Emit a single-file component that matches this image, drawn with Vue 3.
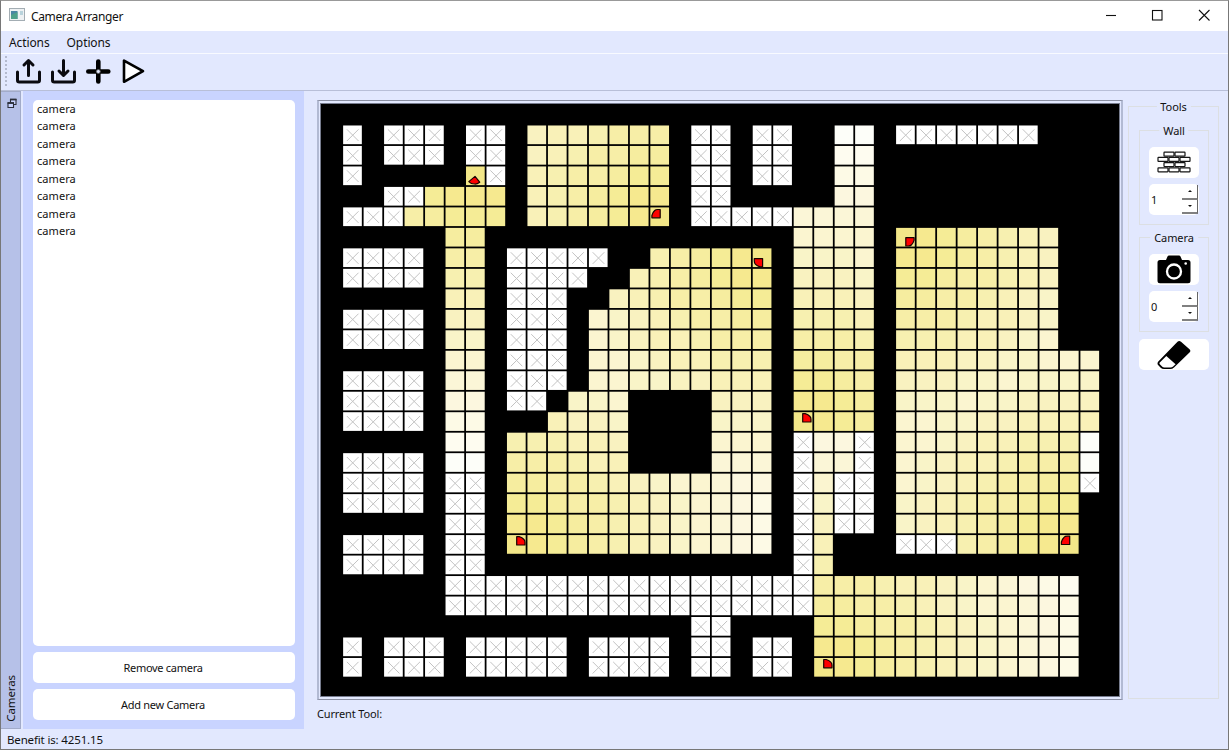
<script setup>
const PITCH = 20.48
const CELL = 18.7
const ORIGIN = { x: 322.65, y: 105 }

// [row, columns without coverage, columns seen by a camera]
const rows = [
  [1, '1 3-5 7-8 18-19 21-22 28-34', '10-16 25-26'],
  [2, '1 3-5 7-8 18-19 21-22', '10-16 25-26'],
  [3, '1 8 18-19 21-22', '7 10-16 25-26'],
  [4, '3-4 18-19', '5-8 10-16 25-26'],
  [5, '1-3 18-22', '4-8 10-16 23-26'],
  [6, '', '6-7 23-26 28-35'],
  [7, '1-4 9-13', '6-7 16-21 23-26 28-35'],
  [8, '1-4 9-12', '6-7 15-21 23-26 28-35'],
  [9, '9-11', '6-7 14-21 23-26 28-35'],
  [10, '1-4 9-11', '6-7 13-21 23-26 28-35'],
  [11, '1-4 9-11', '6-7 13-21 23-26 28-35'],
  [12, '9-11', '6-7 13-21 23-26 28-37'],
  [13, '1-4 9-11', '6-7 13-21 23-26 28-37'],
  [14, '1-4 9-10', '6-7 12-14 19-21 23-26 28-37'],
  [15, '1-4', '6-7 11-14 19-21 23-26 28-37'],
  [16, '23 26', '6-7 9-14 19-21 24-25 28-37'],
  [17, '1-4 23 26', '6-7 9-14 19-21 24-25 28-37'],
  [18, '1-4 6-7 23 25-26 37', '9-21 24 28-36'],
  [19, '1-4 6-7 23 25-26', '9-21 24 28-36'],
  [20, '6-7 23 25-26', '9-21 24 28-36'],
  [21, '1-4 6-7 23 28-30', '9-21 24 31-36'],
  [22, '1-4 6-7 23', '24'],
  [23, '6-23', '24-36'],
  [24, '6-23', '24-36'],
  [25, '18-19', '24-36'],
  [26, '1 3-5 7-11 13-16 18-19 21-22', '24-36'],
  [27, '1 3-5 7-11 13-16 18-19 21-22', '24-36'],
]

const tints = [
  '#f3e788', '#f6e98f', '#f5ec96', '#f6ed9f', '#f7eea7', '#f7f0b0', '#f9f1b8', '#f9f2c0',
  '#f9f4c8', '#fbf5d0', '#fbf6d7', '#fcf7df', '#fdfae6', '#fefcf0', '#fdfef9',
]

function expand(spec) {
  return spec.split(' ').filter(Boolean).flatMap((part) => {
    const [from, to = from] = part.split('-').map(Number)
    return Array.from({ length: to - from + 1 }, (_, i) => from + i)
  })
}

function sources(c, r) {
  if (c <= 8) return [[7, 3]]
  if (c <= 16 && r <= 5) return [[16, 5]]
  if (c <= 21 && r <= 21) return [[21, 7], [9, 21]]
  if (c <= 26 && r <= 15) return [[23, 15]]
  if (c >= 28 && r <= 21) return [[28, 6], [36, 21]]
  return [[24, 27]]
}

function tint(c, r) {
  if (c === 37 && r >= 16) return '#fdfef9'
  const d = Math.min(...sources(c, r).map(([x, y]) => Math.hypot(c - x, r - y)))
  return tints[Math.min(tints.length - 1, Math.round(d))]
}

const px = (c) => +(ORIGIN.x + c * PITCH).toFixed(2)
const py = (r) => +(ORIGIN.y + r * PITCH).toFixed(2)

const cells = rows.flatMap(([r, blank, seen]) => [
  ...expand(blank).map((c) => ({ x: px(c), y: py(r), fill: '#fff', blank: true })),
  ...expand(seen).map((c) => ({ x: px(c), y: py(r), fill: tint(c, r), blank: false })),
])
const crosses = cells
  .filter((c) => c.blank)
  .map((c) => `M${c.x + 3.8} ${c.y + 3.9}l11.6 11.6m0-11.6l-11.6 11.6`)
  .join('')

// corner position and rotation of each view wedge
const wedges = [
  [660.2, 217.8, 180],
  [762.6, 258.6, 90],
  [905.8, 237.7, 0],
  [516.7, 545, 270],
  [802.7, 422, 270],
  [1069.7, 544.5, 180],
  [823.7, 667.8, 270],
]

const list = Array.from({ length: 8 }, () => 'camera')
const bricks = [
  [7, 0.6], [18, 0.6], [1, 5.8], [12, 5.8], [23, 5.8], [7, 11], [18, 11], [1, 16.2], [12, 16.2], [23, 16.2],
]
</script>

<template>
  <div class="window">
    <header class="title">
      <svg class="app-icon" width="16" height="14" viewBox="0 0 16 14">
        <rect x=".5" y=".5" width="15" height="12" fill="#eef1f3" stroke="#a3adb3" />
        <rect x="2" y="3" width="6.500" height="8" fill="#4b86a4" />
        <path d="M2 7l6.500-3v7H2z" fill="#4fa08a" />
        <rect x="11" y="3" width="3" height="4" fill="#b9d3dc" />
      </svg>
      <span class="title-text">Camera Arranger</span>
      <svg class="controls" width="110" height="14" viewBox="0 0 110 14">
        <g fill="none" stroke="#111" stroke-width="1.1">
          <path d="M1 7.5h10" />
          <rect x="47.5" y="2.5" width="9.5" height="9.5" />
          <path d="M94 2l10.5 10.5M104.500 2L94 12.500" />
        </g>
      </svg>
    </header>

    <nav class="menu"><span>Actions</span><span>Options</span></nav>

    <div class="toolbar">
      <i class="grip"></i>
      <svg width="134" height="30" viewBox="14 56 134 30">
        <g fill="none" stroke="#0b0b10" stroke-width="3" stroke-linecap="round" stroke-linejoin="round">
          <path d="M17.500 72v8.200q0 1.800 1.800 1.800h18.400q1.800 0 1.800-1.800V72M28.500 75.500V62M24 65l4.500-4.500L33 65" />
          <path d="M52.500 72v8.200q0 1.800 1.800 1.800h18.400q1.800 0 1.800-1.800V72M63.500 60.500V74M59 71l4.500 4.500L68 71" />
        </g>
        <path d="M98.300 61.500v20M88.300 71.500h20" fill="none" stroke="#000" stroke-width="4.600" stroke-linecap="round" />
        <circle cx="98.300" cy="71.500" r="2" fill="#e2e8fe" stroke="#555" stroke-width=".8" />
        <path d="M124 60.600v21.200l19-10.600z" fill="#fff" stroke="#000" stroke-width="2.600" stroke-linejoin="round" />
      </svg>
    </div>

    <main class="body">
      <aside class="strip">
        <svg width="10" height="11" viewBox="0 0 10 11">
          <g fill="#c9d4ff" stroke="#2c2f3a" stroke-width="1.100">
            <path d="M3.500 1.500h5.500v5H3.500z" /><path d="M3 1.500h6.500" stroke-width="1.800" />
            <path d="M1 5h5.500v4.500H1z" /><path d="M.5 5h6.500" stroke-width="1.800" />
          </g>
        </svg>
        <span>Cameras</span>
      </aside>

      <section class="dock">
        <ul class="list"><li v-for="(name, i) in list" :key="i">{{ name }}</li></ul>
        <button>Remove camera</button>
        <button>Add new Camera</button>
      </section>

      <section class="center">
        <div class="frame">
          <svg class="map" width="798" height="592" viewBox="321 104 798 592">
            <rect x="321" y="104" width="798" height="592" fill="#000" />
            <rect v-for="(c, i) in cells" :key="i" :x="c.x" :y="c.y" :width="CELL" :height="CELL" :fill="c.fill" />
            <path :d="crosses" fill="none" stroke="#c3c3c3" stroke-width="1" />
            <g fill="#f00" stroke="#180400" stroke-width="1.200" stroke-linejoin="round">
              <path
                v-for="(w, i) in wedges"
                :key="i"
                d="M0 0H8.300V2.500Q7.500 5.500 5.500 7.300Q4.500 8.300 2.500 8.300H0Z"
                :transform="`translate(${w[0]} ${w[1]}) rotate(${w[2]})`"
              />
              <path d="M475 176.400L479.700 182.200Q477 184.300 474.500 184Q471 184 468.800 181.600Z" />
            </g>
          </svg>
        </div>
        <div class="current">Current Tool:</div>
      </section>

      <aside class="tools group">
        <span class="legend">Tools</span>
        <div class="group inner">
          <span class="legend">Wall</span>
          <div class="tile">
            <svg width="35" height="23" viewBox="0 0 35 23">
              <rect v-for="(b, i) in bricks" :key="i" :x="b[0]" :y="b[1] + .6" width="10" height="4" rx=".5" fill="#fff" stroke="#151515" stroke-width="1.200" />
            </svg>
          </div>
          <div class="spin"><span>1</span><div class="arrows"><i class="up"></i><i class="down"></i></div></div>
        </div>
        <div class="group inner second">
          <span class="legend">Camera</span>
          <div class="tile">
            <svg width="34" height="29" viewBox="0 0 34 29">
              <path d="M3 5h6l1.500-3.500Q11 .5 12 .5h10q1 0 1.500 1L25 5h6q2.500 0 2.500 2.500v18.200q0 2.500-2.500 2.500H3Q.500 28.200.500 25.700V7.500Q.500 5 3 5z" fill="#000" />
              <circle cx="17" cy="16.500" r="7" fill="#000" stroke="#fff" stroke-width="2.300" />
              <circle cx="28.700" cy="8.500" r="1.300" fill="#fff" />
            </svg>
          </div>
          <div class="spin"><span>0</span><div class="arrows"><i class="up"></i><i class="down"></i></div></div>
        </div>
        <div class="tile eraser">
          <svg width="34" height="30" viewBox="0 0 34 30">
            <path d="M20.500 1.800Q22.200.2 24 1.800l8.500 7.500Q34.200 11 32.500 12.600L17 27.500Q15.500 29 13 29H7Q5 29 3.700 27.700L1.300 25.300Q-.3 23.500 1.300 21.500z" fill="#000" />
            <path d="M9.300 15.900l9.300 8.400-2.500 2.300q-1 .9-2.600.9H7.300q-1.200 0-2-.8l-2.500-2.500q-.8-.9 0-1.800z" fill="#fff" />
          </svg>
        </div>
      </aside>
    </main>

    <footer class="status">Benefit is: 4251.15</footer>
  </div>
</template>

<style>
html, body { margin: 0; overflow: hidden; }
</style>

<style scoped>
* { box-sizing: border-box; }
.window {
  width: 1229px; height: 750px; display: flex; flex-direction: column;
  background: #e2e8fe; border: 1px solid #777; border-top-color: #999;
  font: 11.5px/17px "Noto Sans", "Open Sans", sans-serif; color: #111;
}
.title { height: 30px; background: #fff; display: flex; align-items: center; padding-left: 8px; flex: none; }
.app-icon { margin-top: -2px; }
.title-text { margin-left: 6px; font-size: 12px; letter-spacing: -.36px; }
.controls { margin-left: auto; margin-right: 13px; margin-top: -2px; }
.menu { height: 23px; flex: none; display: flex; gap: 17px; padding: 3px 8px 0; border-bottom: 1px solid #f8faff; font-size: 12px; letter-spacing: -.1px; }
.toolbar { height: 37px; flex: none; display: flex; align-items: center; border-bottom: 1px solid #b8bfd8; padding: 0 0 2px 4px; }
.grip { width: 2px; height: 30px; margin-right: 7px; background: repeating-linear-gradient(#b4bace 0 2px, transparent 2px 4px); }
.body { flex: 1; min-height: 0; display: flex; }
.strip {
  width: 20px; background: #b6c1e8; border: 1px solid #a2abc9; border-left: 0;
  display: flex; flex-direction: column; justify-content: space-between; align-items: center; padding: 6px 0 6px 3px;
}
.strip span { writing-mode: vertical-rl; transform: rotate(180deg); font-size: 11.5px; letter-spacing: -.1px; line-height: 16px; margin-right: 2px; }
.dock { width: 281px; margin-left: 2px; background: #c9d4ff; padding: 9px 9px 9px 10px; display: flex; flex-direction: column; gap: 6px; }
.list { flex: 1; margin: 0; padding: 0 4px; list-style: none; background: #fff; border-radius: 5px; font-size: 11px; }
.list li { height: 17.45px; line-height: 17px; letter-spacing: .05px; }
.dock button { height: 31px; flex: none; border: 0; border-radius: 5px; background: #fff; font: inherit; font-size: 11px; letter-spacing: -.28px; color: #111; padding: 0 2px 0 0; }
.center { width: 807px; margin-left: 13px; padding-top: 9px; }
.frame {
  width: 806px; height: 600px; border: 1px solid #8b90a3; border-left: 2px solid #b2bad3; border-right: 2px solid #b2bad3;
  padding: 2px 1px;
}
.map { display: block; width: 800px; height: 594px; border: 1px solid #777c8e; }
.current { margin-top: 5px; font-size: 11px; letter-spacing: -.15px; }
.group { position: relative; border: 1px solid #dcdfe2; }
.legend {
  position: absolute; top: -9px; left: 50%; transform: translateX(-50%); background: #e2e8fe; padding: 0 4px;
  font-size: 11px; line-height: 17px; letter-spacing: -.1px;
}
.tools { width: 91px; height: 593px; margin: 15px 0 0 4px; padding: 23px 9px 0 10px; display: flex; flex-direction: column; }
.inner { width: 70px; height: 95px; padding: 16px 9px 8px; display: flex; flex-direction: column; gap: 6px; flex: none; }
.second { margin-top: 12px; }
.tile { height: 31px; flex: none; background: #fff; border-radius: 5px; display: flex; align-items: center; justify-content: center; }
.eraser { width: 70px; margin-top: 7px; }
.spin { height: 31px; flex: none; background: #fff; border-radius: 5px; display: flex; align-items: center; padding-left: 2px; font-size: 11px; }
.arrows { margin-left: auto; margin-right: 1px; width: 16px; height: 29px; display: flex; flex-direction: column; }
.arrows i { flex: 1; display: flex; align-items: center; justify-content: center; border-right: 1px solid #666; border-bottom: 2px solid #808080; }
.arrows i::after { content: ""; border: 2px solid transparent; }
.up::after { border-top-width: 0 !important; border-bottom-color: #111 !important; }
.down::after { border-bottom-width: 0 !important; border-top-color: #111 !important; }
.status { height: 20px; flex: none; padding: 2px 6px; font-size: 11.5px; letter-spacing: -.15px; }
</style>
